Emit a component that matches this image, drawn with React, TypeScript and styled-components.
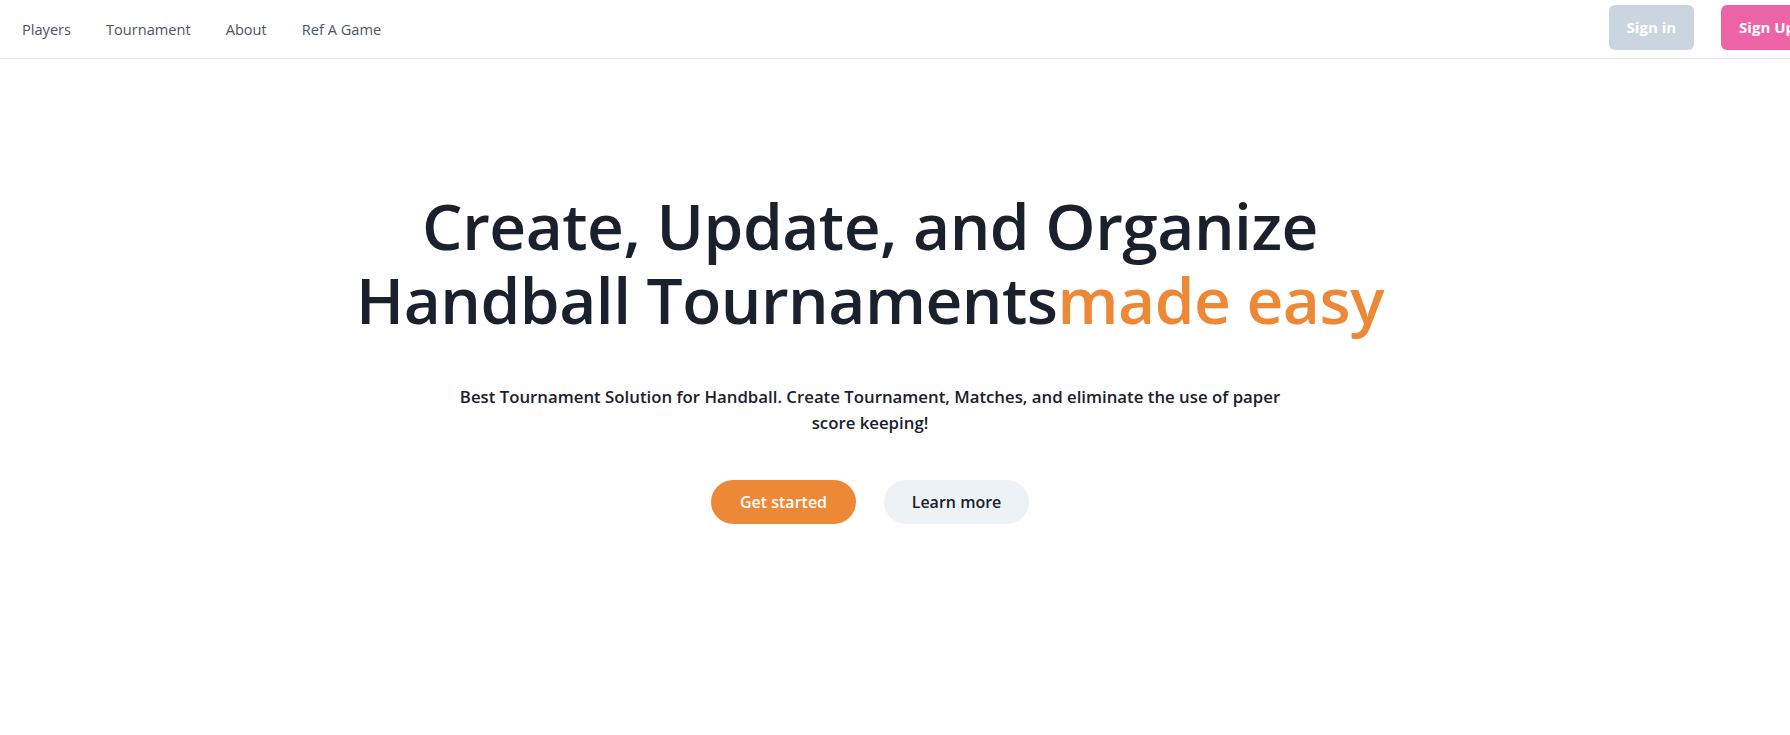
import React from "react";
import styled, { createGlobalStyle } from "styled-components";

const GlobalStyle = createGlobalStyle`
  html, body {
    margin: 0;
    padding: 0;
    background: #ffffff;
  }
  body {
    font-family: "Open Sans", "Noto Sans", "Liberation Sans", sans-serif;
    overflow: hidden;
  }
  * { box-sizing: border-box; }
`;

const Page = styled.div`
  width: 100%;
  min-height: 735px;
  overflow: hidden;
`;

const NavBar = styled.nav`
  height: 59px;
  display: flex;
  align-items: center;
  justify-content: space-between;
  padding-left: 22px;
  margin-right: -23px;
  border-bottom: 1px solid #e2e8f0;
`;

const NavLinks = styled.div`
  display: flex;
  align-items: center;
  gap: 35px;
`;

const NavLink = styled.a`
  font-size: 14.6px;
  color: #4a5568;
  text-decoration: none;
  cursor: pointer;
`;

const NavActions = styled.div`
  display: flex;
  align-items: center;
  gap: 27px;
  margin-top: -4px;
`;

const AuthButton = styled.button<{ $variant: "muted" | "pink" }>`
  height: 45px;
  padding: 0 18px;
  border: none;
  border-radius: 6px;
  font-family: inherit;
  font-size: 15px;
  font-weight: 700;
  color: #ffffff;
  background: ${(p) => (p.$variant === "pink" ? "#ed64a6" : "#cbd5e0")};
  cursor: pointer;
`;

const Hero = styled.section`
  display: flex;
  flex-direction: column;
  align-items: center;
  padding: 130px 50px 0 0;
`;

const Title = styled.h1`
  margin: 0;
  font-size: 64px;
  font-weight: 600;
  letter-spacing: -0.5px;
  line-height: 74px;
  color: #1a202c;
  text-align: center;
`;

const Accent = styled.span`
  color: #ed8936;
`;

const Subtitle = styled.p`
  margin: 47px 0 0;
  font-size: 16.8px;
  font-weight: 600;
  line-height: 26px;
  color: #1a202c;
  text-align: center;
`;

const Actions = styled.div`
  display: flex;
  gap: 28px;
  margin-top: 44px;
`;

const PillButton = styled.button<{ $variant: "primary" | "light" }>`
  width: 145px;
  height: 44px;
  border: none;
  border-radius: 9999px;
  font-family: inherit;
  font-size: 16px;
  font-weight: 600;
  color: ${(p) => (p.$variant === "primary" ? "#ffffff" : "#1a202c")};
  background: ${(p) => (p.$variant === "primary" ? "#ed8936" : "#edf2f7")};
  cursor: pointer;
`;

export default function App() {
  return (
    <Page>
      <GlobalStyle />
      <NavBar>
        <NavLinks>
          <NavLink>Players</NavLink>
          <NavLink>Tournament</NavLink>
          <NavLink>About</NavLink>
          <NavLink>Ref A Game</NavLink>
        </NavLinks>
        <NavActions>
          <AuthButton $variant="muted">Sign in</AuthButton>
          <AuthButton $variant="pink">Sign Up</AuthButton>
        </NavActions>
      </NavBar>
      <Hero>
        <Title>
          Create, Update, and Organize
          <br />
          Handball Tournaments<Accent>made easy</Accent>
        </Title>
        <Subtitle>
          Best Tournament Solution for Handball. Create Tournament, Matches, and eliminate the use of paper
          <br />
          score keeping!
        </Subtitle>
        <Actions>
          <PillButton $variant="primary">Get started</PillButton>
          <PillButton $variant="light">Learn more</PillButton>
        </Actions>
      </Hero>
    </Page>
  );
}
